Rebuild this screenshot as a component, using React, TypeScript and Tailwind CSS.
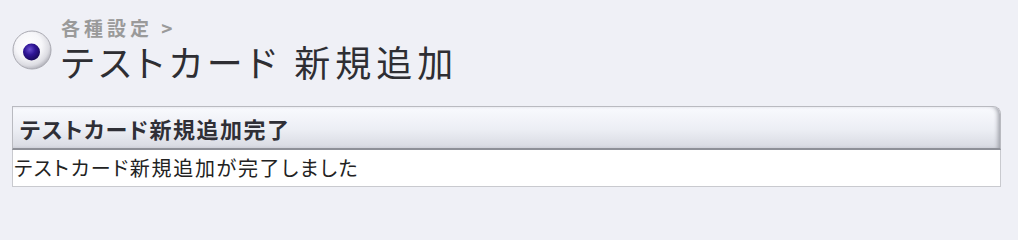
import React from "react";

const jp = "font-['Noto_Sans_CJK_JP','Noto_Sans',sans-serif] [font-feature-settings:'palt']";

function Radio() {
  return (
    <svg width="40" height="40" viewBox="0 0 40 40" className="shrink-0">
      <defs>
        <radialGradient id="sph" cx="0.42" cy="0.38" r="0.62">
          <stop offset="0" stopColor="#ffffff" />
          <stop offset="0.55" stopColor="#f6f6f9" />
          <stop offset="0.85" stopColor="#dcdce2" />
          <stop offset="1" stopColor="#b9b9c1" />
        </radialGradient>
        <radialGradient id="dot" cx="0.4" cy="0.35" r="0.65">
          <stop offset="0" stopColor="#6a4fd0" />
          <stop offset="0.5" stopColor="#2f1596" />
          <stop offset="1" stopColor="#1a0a5c" />
        </radialGradient>
      </defs>
      <circle cx="20" cy="20" r="19" fill="url(#sph)" stroke="#a9a9b1" strokeWidth="1" />
      <circle cx="19.5" cy="22" r="8.5" fill="url(#dot)" />
    </svg>
  );
}

export default function App() {
  return (
    <div className={`min-h-screen w-full bg-[#eff0f6] pt-[18px] ${jp}`}>
      <div className="flex items-center pl-3 gap-[9px]">
        <Radio />
        <div className="flex flex-col">
          <div className="text-[19px] leading-[20px] font-bold text-[#9a9a9a] tracking-[4px]">
            各種設定 &gt;
          </div>
          <div className="mt-[3px] text-[36px] leading-[40px] text-[#2e2e33] tracking-[5px]">
            テストカード 新規追加
          </div>
        </div>
      </div>
      <div className="ml-3 mr-[17px] mt-[25px]">
        <div className="h-[44px] flex items-center pl-[7px] border border-[#b9bac0] border-b-[2px] border-b-[#8e9098] rounded-tr-[8px] bg-[linear-gradient(to_bottom,#f9fafe,#eceef4_55%,#d8dae2)] shadow-[inset_-4px_0_4px_-2px_#9ea0a8]">
          <span className="text-[22px] font-bold text-[#2f2f36] leading-none tracking-[1.5px]">
            テストカード新規追加完了
          </span>
        </div>
        <div className="h-[37px] flex items-center bg-white border border-t-0 border-[#c9cacf] pl-[1px]">
          <span className="text-[20px] text-[#222] leading-none tracking-[1.7px]">
            テストカード新規追加が完了しました
          </span>
        </div>
      </div>
    </div>
  );
}
